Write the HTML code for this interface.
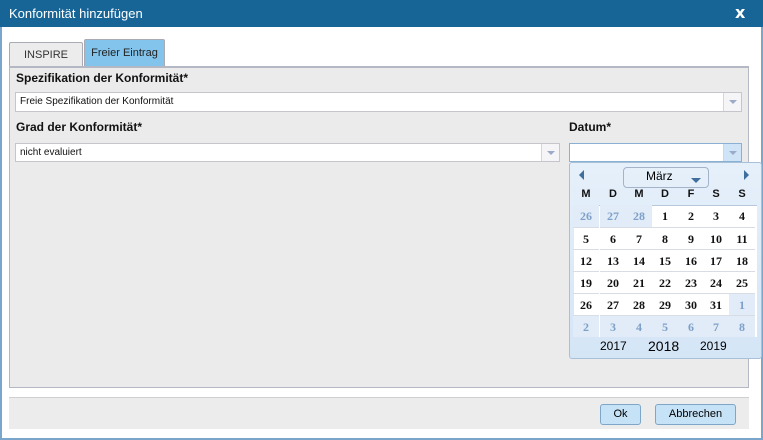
<!DOCTYPE html>
<html><head><meta charset="utf-8"><style>
*{box-sizing:border-box;margin:0;padding:0}
body{width:763px;height:440px;position:relative;background:#fff;font-family:"Liberation Sans",sans-serif;overflow:hidden}
.a{position:absolute}
.win{left:0;top:0;width:763px;height:440px;border:2px solid #7aa6cc;border-top:0}
.title{left:0;top:0;width:763px;height:27px;background:#176597;color:#fff;font-size:13px;line-height:27px;padding-left:9px}
.x{left:735px;top:3px;color:#fff;font-weight:bold;font-size:16px;font-family:"DejaVu Sans",sans-serif}
.tab{top:42px;height:25px;border:1px solid #a8aab4;border-bottom:0;font-size:11px;line-height:24px;text-align:center;border-radius:2px 2px 0 0}
.panel{left:9px;top:66px;width:740px;height:322px;background:#ebebeb;border:1px solid #b4b8c4;border-top:2px solid #b4b8c4}
.lbl{font-weight:bold;font-size:12px;color:#111}
.inp{background:#fff;border:1px solid #c4c6cc;font-size:10px;line-height:17px;padding-left:4px;color:#111}
.dd{position:absolute;right:0;top:0;width:18px;height:100%;border-left:1px solid #d4d6dc;background:#f5f5f7}
.dd:after{content:"";position:absolute;left:5px;top:7px;border-left:4px solid transparent;border-right:4px solid transparent;border-top:4px solid #9aaac8}
.cal{left:569px;top:162px;width:193px;height:197px;background:linear-gradient(#e6f0fa,#d4e5f6);border:1px solid #a8c0d8;border-radius:3px}
.cell{position:absolute;width:26px;height:22px;text-align:center;font:bold 12px "Liberation Serif",serif;line-height:22px;color:#111}
.o{color:#7ea0c8;background:#e1ecf8}
.btn{top:404px;height:21px;background:#c5e2f6;border:1px solid #7ea6c8;border-radius:3px;font-size:11px;text-align:center;line-height:19px}
</style></head><body>
<div class="a win"></div>
<div class="a title">Konformität hinzufügen</div>
<div class="a x">x</div>
<div class="a tab" style="left:9px;width:74px;background:#ececec;color:#333">INSPIRE</div>
<div class="a tab" style="left:84px;width:81px;background:#82c4ec;color:#222;top:39px;height:28px;line-height:27px">Freier Eintrag</div>
<div class="a panel"></div>
<div class="a lbl" style="left:16px;top:71px">Spezifikation der Konformität*</div>
<div class="a inp" style="left:15px;top:92px;width:727px;height:20px">Freie Spezifikation der Konformität<div class="dd"></div></div>
<div class="a lbl" style="left:16px;top:120px">Grad der Konformität*</div>
<div class="a inp" style="left:15px;top:143px;width:545px;height:19px">nicht evaluiert<div class="dd"></div></div>
<div class="a lbl" style="left:569px;top:120px">Datum*</div>
<div class="a inp" style="left:569px;top:143px;width:173px;height:19px;border-color:#8ab0d4"><div class="dd" style="background:#cfe4f6"></div></div>
<div class="a cal">
 <div class="a" style="left:9px;top:7px;border-top:5px solid transparent;border-bottom:5px solid transparent;border-right:5px solid #3d6e9c"></div>
 <div class="a" style="left:174px;top:7px;border-top:5px solid transparent;border-bottom:5px solid transparent;border-left:5px solid #3d6e9c"></div>
 <div class="a" style="left:53px;top:4px;width:86px;height:21px;border:1px solid #a4b4c8;border-radius:4px;font-size:12px;line-height:17px;padding-left:22px">März<div class="a" style="left:67px;top:10px;border-left:5px solid transparent;border-right:5px solid transparent;border-top:5px solid #3d6e9c"></div></div>
</div>
<div class="a" style="left:574px;top:205px;width:183px;height:132px;background:#fff;border-top:1px solid #b8c8dc"></div>
<div id="g"></div>
<div class="a" style="left:600px;top:339px;font-size:12px">2017</div>
<div class="a" style="left:648px;top:338px;font-size:14px">2018</div>
<div class="a" style="left:700px;top:339px;font-size:12px">2019</div>
<div class="a" style="left:9px;top:397px;width:740px;height:32px;background:#ececec;border-top:1px solid #d0d0d0"></div>
<div class="a btn" style="left:600px;width:41px">Ok</div>
<div class="a btn" style="left:655px;width:81px">Abbrechen</div>
<script>
var xs=[573,600,626,652,678,703,729],h='',n="MDMDFSS";
for(var i=0;i<7;i++)h+='<div class="cell" style="left:'+xs[i]+'px;top:183px;font:bold 11px Liberation Sans,sans-serif;line-height:22px">'+n[i]+'</div>';
var d=[26,27,28];for(var k=1;k<=31;k++)d.push(k);for(k=1;k<=8;k++)d.push(k);
for(i=0;i<42;i++){var r=Math.floor(i/7),c=i%7,o=(i<3||i>=34);
h+='<div class="cell'+(o?' o':'')+'" style="left:'+xs[c]+'px;top:'+(205+r*22)+'px;'+(r>0?'border-top:1px solid #d8dce4;':'')+'">'+d[i]+'</div>';}
document.getElementById('g').innerHTML=h;
</script>
</body></html>
